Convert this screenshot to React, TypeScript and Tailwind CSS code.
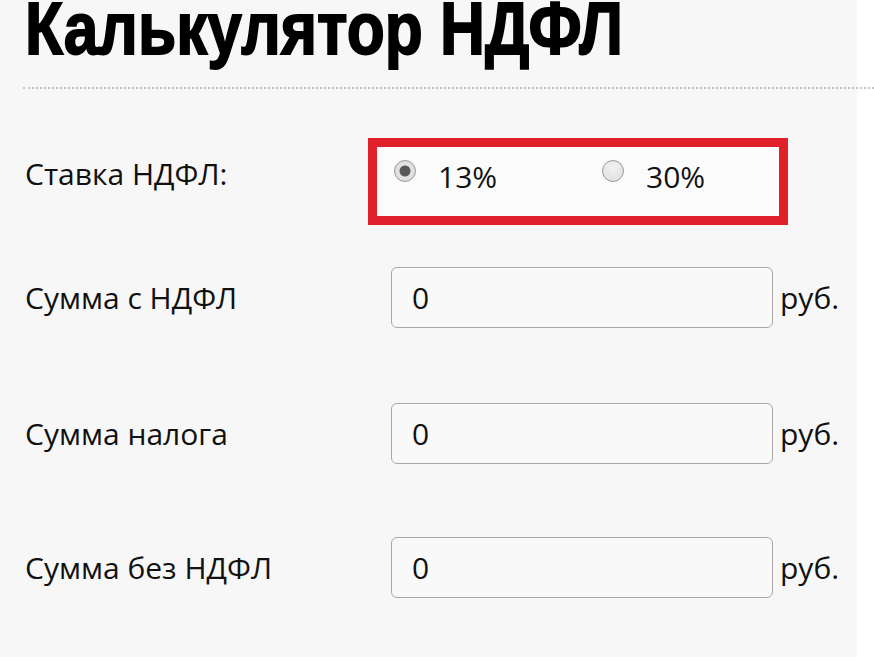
import { useState } from "react";

const body = { fontFamily: '"Open Sans", "Liberation Sans", sans-serif' };

type FieldRowProps = {
  label: string;
  value: string;
  className?: string;
};

const FieldRow = ({ label, value, className }: FieldRowProps) => (
  <div className={`flex items-center h-[61px] ${className ?? ""}`}>
    <div className="w-[366px] text-[30px] leading-[36px] text-[#111]">{label}</div>
    <input
      readOnly
      value={value}
      className="w-[382px] h-[61px] rounded-[6px] border border-[#a8a8a8] bg-[#f9f9f9] pl-[20px] text-[30px] text-[#111] outline-none"
      style={body}
    />
    <span className="ml-[7px] text-[30px] leading-[36px] text-[#111]">руб.</span>
  </div>
);

const radioCls =
  "appearance-none shrink-0 w-[22px] h-[22px] mt-[1px] rounded-full border border-[#9a9a9a] bg-[radial-gradient(circle_at_50%_35%,#f2f2f2_0,#dcdcdc_100%)] checked:bg-[radial-gradient(circle,#565656_0,#5a5a5a_5px,#e4e4e4_6px,#d6d6d6_100%)]";

export default function App() {
  const [rate, setRate] = useState("13");

  return (
    <div className="min-h-[662px] bg-white">
      <div className="w-[857px] h-[657px] bg-[#f7f7f7] pl-[25px]" style={body}>
        <h1
          className="h-[66px] text-[75px] leading-[56px] font-bold text-black whitespace-nowrap"
          style={{ fontFamily: '"Liberation Sans", Arial, sans-serif' }}
        >
          <span className="inline-block origin-left scale-x-[0.83] [-webkit-text-stroke:1.8px_black]">
            Калькулятор НДФЛ
          </span>
        </h1>
        <div className="mt-[21px] -ml-[2px] mr-[-17px] border-t-2 border-dotted border-[#c4c4c4]" />

        <div className="mt-[49px] flex items-start h-[87px]">
          <div className="w-[343px] mt-[18px] text-[30px] leading-[36px] text-[#111]">Ставка НДФЛ:</div>
          <div className="w-[420px] h-[87px] border-[9px] border-[#e0212b] bg-[#fbfbfb] pt-[12px] pl-[17px] flex items-start">
            <label className="w-[208px] flex items-start gap-[22px] cursor-pointer">
              <input
                type="radio"
                name="rate"
                checked={rate === "13"}
                onChange={() => setRate("13")}
                className={radioCls}
              />
              <span className="text-[30px] leading-[36px] text-[#111]">13%</span>
            </label>
            <label className="flex items-start gap-[22px] cursor-pointer">
              <input
                type="radio"
                name="rate"
                checked={rate === "30"}
                onChange={() => setRate("30")}
                className={radioCls}
              />
              <span className="text-[30px] leading-[36px] text-[#111]">30%</span>
            </label>
          </div>
        </div>

        <FieldRow label="Сумма с НДФЛ" value="0" className="mt-[42px]" />
        <FieldRow label="Сумма налога" value="0" className="mt-[75px]" />
        <FieldRow label="Сумма без НДФЛ" value="0" className="mt-[73px]" />
      </div>
    </div>
  );
}
